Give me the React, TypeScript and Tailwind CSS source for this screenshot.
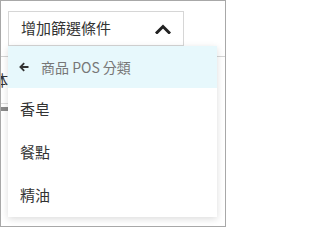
const font = { fontFamily: '"Noto Sans CJK TC", "Noto Sans", sans-serif' };

const ChevronUp = () => (
  <svg width="16" height="10" viewBox="0 0 16 10" fill="none">
    <path d="M2 8.5 L8 2.5 L14 8.5" stroke="#222" strokeWidth="3" strokeLinecap="square" />
  </svg>
);

const ArrowLeft = () => (
  <svg width="10" height="10" viewBox="0 0 10 10" fill="none">
    <path d="M9.5 5 H1.5 M5.2 1.2 L1.4 5 L5.2 8.8" stroke="#333" strokeWidth="1.8" />
  </svg>
);

const options = ["香皂", "餐點", "精油"];

export default function App() {
  return (
    <div
      className="relative w-[226px] h-[227px] overflow-hidden border border-[#a8a8a8] bg-white"
      style={font}
    >
      {/* page behind the menu */}
      <div className="pl-[7px] pt-[10px]">
        <button className="flex h-[35px] w-[176px] items-center justify-between border border-[#d6d6d6] bg-white pl-[12px] pr-[12px] text-[15px] text-[#333]">
          <span>增加篩選條件</span>
          <ChevronUp />
        </button>
      </div>
      <div className="mt-[10px] h-px w-full bg-[#d4d4d4]" />
      <div className="ml-[-8px] mt-[15px] text-[15px] leading-[15px] text-[#333]">体</div>
      <div className="mt-[16px] h-px w-[8px] bg-[#dddddd]" />
      <div className="mt-[3px] h-[4px] w-[8px] bg-[#8a8a8a]" />

      {/* dropdown menu */}
      <div className="absolute left-[7px] top-[45px] w-[209px] bg-white shadow-[0_2px_7px_rgba(0,0,0,0.14)]">
        <div className="flex h-[42px] items-center bg-[#e7f8fc] pl-[11px]">
          <ArrowLeft />
          <span className="ml-[12px] text-[14px] text-[#777]">商品 POS 分類</span>
        </div>
        {options.map((o) => (
          <div key={o} className="flex h-[43px] items-center pl-[12px] text-[15px] text-[#333]">
            {o}
          </div>
        ))}
      </div>
    </div>
  );
}
